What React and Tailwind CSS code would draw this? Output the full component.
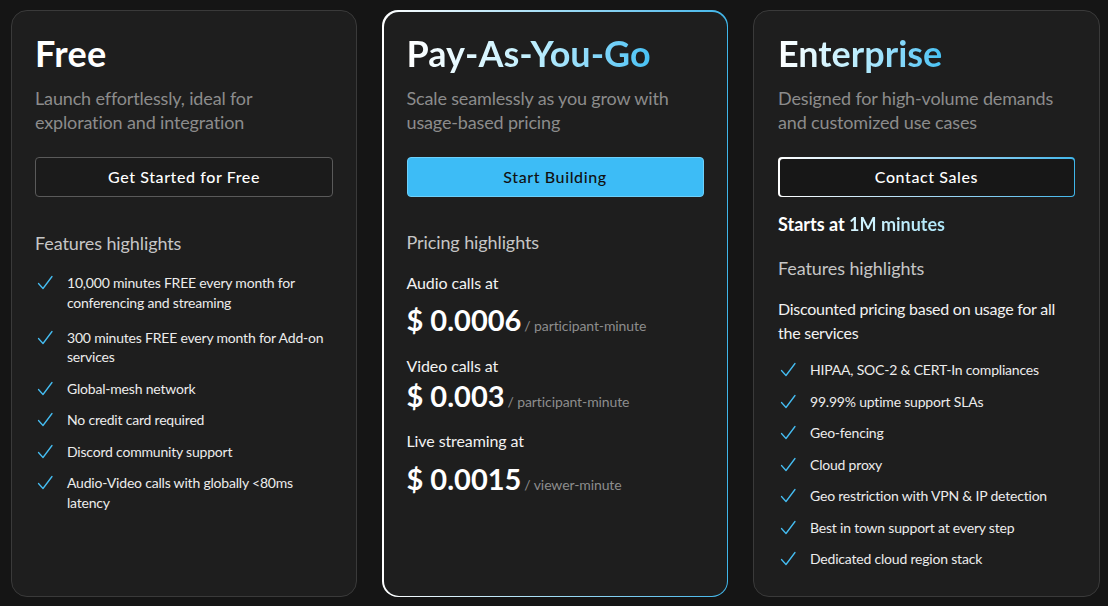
import React from "react";

const Check = () => (
  <svg width="16" height="16" viewBox="0 0 16 16" fill="none" className="shrink-0 mt-[2px]">
    <path d="M1.5 8.5 L6 13.5 L15 1.5" stroke="#45bdf2" strokeWidth="1.3" strokeLinecap="round" strokeLinejoin="round" />
  </svg>
);

function Item({ children, className = "", leading = "leading-[20px]" }) {
  return (
    <li className={`flex items-start gap-[14px] pl-[2px] text-[14px] tracking-[-0.2px] text-[#ececec] ${leading} ${className}`}>
      <Check />
      <span>{children}</span>
    </li>
  );
}

function Price({ value, unit }) {
  return (
    <div className="flex items-baseline gap-[3px]">
      <span className="text-[29px] leading-[36px] font-bold text-white">{value}</span>
      <span className="text-[14px] tracking-[-0.1px] text-[#8d8d8d]">/ {unit}</span>
    </div>
  );
}

export default function App() {
  const font = { fontFamily: "Lato, 'Noto Sans', sans-serif" };
  return (
    <div className="w-[1108px] h-[606px] bg-[#151515] flex gap-[25px] pl-[11px] pt-[10px]" style={font}>
      {/* Free */}
      <div className="w-[346px] h-[587px] rounded-[16px] border border-[#3a3a3a] bg-[#1e1e1e] px-[23px] pt-[22px]">
        <h2 className="text-[36px] leading-[40px] font-bold text-white tracking-[0.3px]">Free</h2>
        <p className="mt-[13px] text-[18px] leading-[24px] tracking-[-0.15px] text-[#8c8c8c]">
          Launch effortlessly, ideal for<br />exploration and integration
        </p>
        <button className="mt-[23px] w-full h-[40px] rounded-[4px] border border-[#5a5a5a] bg-[#1b1b1b] text-[16px] font-medium text-white tracking-[0.6px]">
          Get Started for Free
        </button>
        <h3 className="mt-[34px] text-[18px] leading-[24px] tracking-[-0.1px] text-[#c6c6c6]">Features highlights</h3>
        <ul className="mt-[18px] flex flex-col gap-[12px] pr-[4px]">
          <Item leading="leading-[19.5px]" className="mb-[3.5px]">10,000 minutes FREE every month for<br />conferencing and streaming</Item>
          <Item leading="leading-[19.5px]">300 minutes FREE every month for Add-on services</Item>
          <Item leading="leading-[19.5px]">Global-mesh network</Item>
          <Item leading="leading-[19.5px]">No credit card required</Item>
          <Item leading="leading-[19.5px]">Discord community support</Item>
          <Item leading="leading-[19.5px]">Audio-Video calls with globally &lt;80ms<br />latency</Item>
        </ul>
      </div>

      {/* Pay as you go */}
      <div className="w-[346px] h-[587px] rounded-[16px] bg-gradient-to-r from-white via-[#9fdcf5] to-[#3fb6ea] p-[1.5px]">
        <div className="w-full h-full rounded-[15px] bg-[#1e1e1e] px-[23px] pt-[21px]">
          <h2 className="text-[36px] leading-[40px] font-bold bg-gradient-to-r from-white via-[#c2f0fe] to-[#45c2f5] bg-clip-text text-transparent w-fit">
            Pay-As-You-Go
          </h2>
          <p className="mt-[13px] text-[18px] leading-[24px] tracking-[-0.15px] text-[#8c8c8c]">
            Scale seamlessly as you grow with<br />usage-based pricing
          </p>
          <button className="mt-[23px] w-full h-[40px] rounded-[4px] border border-[#6dd0fa] bg-[#3dbcf6] text-[16px] font-medium text-[#111] tracking-[0.6px]">
            Start Building
          </button>
          <h3 className="mt-[33px] text-[18px] leading-[24px] tracking-[-0.1px] text-[#c6c6c6]">Pricing highlights</h3>
          <div className="mt-[17px] text-[16px] leading-[24px] tracking-[-0.1px] text-[#f2f2f2]">Audio calls at</div>
          <div className="mt-[7px]"><Price value="$ 0.0006" unit="participant-minute" /></div>
          <div className="mt-[16px] text-[16px] leading-[24px] tracking-[-0.1px] text-[#f2f2f2]">Video calls at</div>
          <div className="mt-0"><Price value="$ 0.003" unit="participant-minute" /></div>
          <div className="mt-[15px] text-[16px] leading-[24px] tracking-[-0.1px] text-[#f2f2f2]">Live streaming at</div>
          <div className="mt-[8px]"><Price value="$ 0.0015" unit="viewer-minute" /></div>
        </div>
      </div>

      {/* Enterprise */}
      <div className="w-[347px] h-[587px] rounded-[16px] border border-[#3a3a3a] bg-[#1e1e1e] px-[24px] pt-[22px]">
        <h2 className="text-[36px] leading-[40px] font-bold bg-gradient-to-r from-white via-[#b8ecfd] to-[#45c2f5] bg-clip-text text-transparent w-fit">
          Enterprise
        </h2>
        <p className="mt-[13px] text-[18px] leading-[24px] tracking-[-0.15px] text-[#8c8c8c]">
          Designed for high-volume demands<br />and customized use cases
        </p>
        <div className="mt-[23px] w-full h-[40px] rounded-[4px] bg-gradient-to-r from-white to-[#3fb6ea] p-[1.5px]">
          <button className="w-full h-full rounded-[3px] bg-[#171717] text-[16px] font-medium text-white tracking-[0.6px]">
            Contact Sales
          </button>
        </div>
        <div className="mt-[15px] text-[18px] leading-[24px] font-bold text-white">
          Starts at <span className="bg-gradient-to-r from-[#d6f5ff] to-[#aee7fa] bg-clip-text text-transparent">1M minutes</span>
        </div>
        <h3 className="mt-[20px] text-[18px] leading-[24px] tracking-[-0.1px] text-[#c6c6c6]">Features highlights</h3>
        <p className="mt-[17px] text-[16px] leading-[24px] tracking-[-0.25px] text-[#f2f2f2]">
          Discounted pricing based on usage for all<br />the services
        </p>
        <ul className="mt-[15px] flex flex-col gap-[11.5px]">
          <Item>HIPAA, SOC-2 &amp; CERT-In compliances</Item>
          <Item>99.99% uptime support SLAs</Item>
          <Item>Geo-fencing</Item>
          <Item>Cloud proxy</Item>
          <Item>Geo restriction with VPN &amp; IP detection</Item>
          <Item>Best in town support at every step</Item>
          <Item>Dedicated cloud region stack</Item>
        </ul>
      </div>
    </div>
  );
}
